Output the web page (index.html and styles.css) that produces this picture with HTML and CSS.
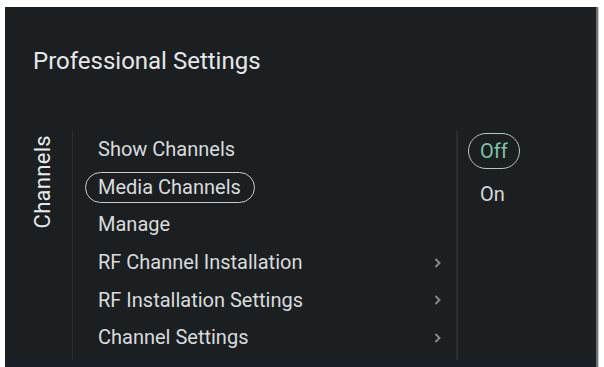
FILE: index.html
```html
<!DOCTYPE html>
<html>
<head>
<meta charset="utf-8">
<link rel="stylesheet" href="styles.css">
</head>
<body>
<div class="screen">
  <div class="title">Professional Settings</div>
  <div class="content">
    <div class="side"><span class="side-label">Channels</span></div>
    <div class="menu">
      <div class="item"><span class="label">Show Channels</span></div>
      <div class="item"><span class="label selected">Media Channels</span></div>
      <div class="item"><span class="label">Manage</span></div>
      <div class="item"><span class="label">RF Channel Installation</span><svg class="chev" width="9" height="12" viewBox="0 0 9 12"><polyline points="2.5,2 6.5,6 2.5,10" fill="none" stroke="#8a8c8e" stroke-width="1.8"/></svg></div>
      <div class="item"><span class="label">RF Installation Settings</span><svg class="chev" width="9" height="12" viewBox="0 0 9 12"><polyline points="2.5,2 6.5,6 2.5,10" fill="none" stroke="#8a8c8e" stroke-width="1.8"/></svg></div>
      <div class="item"><span class="label">Channel Settings</span><svg class="chev" width="9" height="12" viewBox="0 0 9 12"><polyline points="2.5,2 6.5,6 2.5,10" fill="none" stroke="#8a8c8e" stroke-width="1.8"/></svg></div>
    </div>
    <div class="options">
      <div class="opt"><span class="opt-pill">Off</span></div>
      <div class="opt"><span class="opt-plain">On</span></div>
    </div>
  </div>
  <div class="bottom"></div>
</div>
</body>
</html>
```
FILE: styles.css
```css
html, body {
  margin: 0;
  padding: 0;
  background: #ffffff;
}
body {
  font-family: Roboto, "Noto Sans", sans-serif;
}
.screen {
  margin: 7px 0 0 5px;
  width: 591px;
  height: 360px;
  background: #1c1f22;
  box-shadow: 2px 0 0 #6f7173, 3px 0 0 #c8c9ca;
  overflow: hidden;
  color: #dcdedf;
  display: flex;
  flex-direction: column;
}
.title {
  padding: 40px 0 0 28px;
  font-size: 24px;
  line-height: 28px;
  height: 28px;
  color: #e6e7e8;
}
.content {
  margin-top: 56px;
  display: flex;
  flex: 1;
}
.side {
  width: 68px;
  padding-left: 25px;
  box-sizing: border-box;
  border-right: 1px solid #2a2d30;
  padding-top: 4px;
}
.side-label {
  display: inline-block;
  writing-mode: vertical-rl;
  transform: rotate(180deg);
  font-size: 22px;
  line-height: 26px;
  letter-spacing: 0.3px;
  color: #e8e9ea;
}
.menu {
  width: 383px;
  display: flex;
  flex-direction: column;
  border-right: 2px solid #2c2f32;
}
.item {
  height: 37.6px;
  display: flex;
  align-items: center;
  padding-left: 12px;
  padding-right: 14px;
  font-size: 20px;
  line-height: 23px;
  color: #d9dbdc;
}
.label {
  padding: 3px 13px 3px 12px;
  border: 1.5px solid transparent;
  border-radius: 17px;
  flex: 1;
}
.label.selected {
  flex: 0 0 auto;
  border-color: #c9cbcc;
}
.chev {
  flex: 0 0 auto;
}
.options {
  padding: 2px 0 0 10px;
  display: flex;
  flex-direction: column;
  gap: 13px;
}
.opt-pill {
  display: inline-block;
  height: 34px;
  line-height: 34px;
  padding: 0 11px 0 11px;
  border: 1.5px solid #b9c6c1;
  border-radius: 19px;
  font-size: 20px;
  color: #7fc4a6;
}
.opt-plain {
  display: inline-block;
  padding-left: 12px;
  font-size: 20px;
  line-height: 24px;
  color: #d6d8d9;
}
.bottom {
  height: 7px;
  background: #1a1e26;
}
```
